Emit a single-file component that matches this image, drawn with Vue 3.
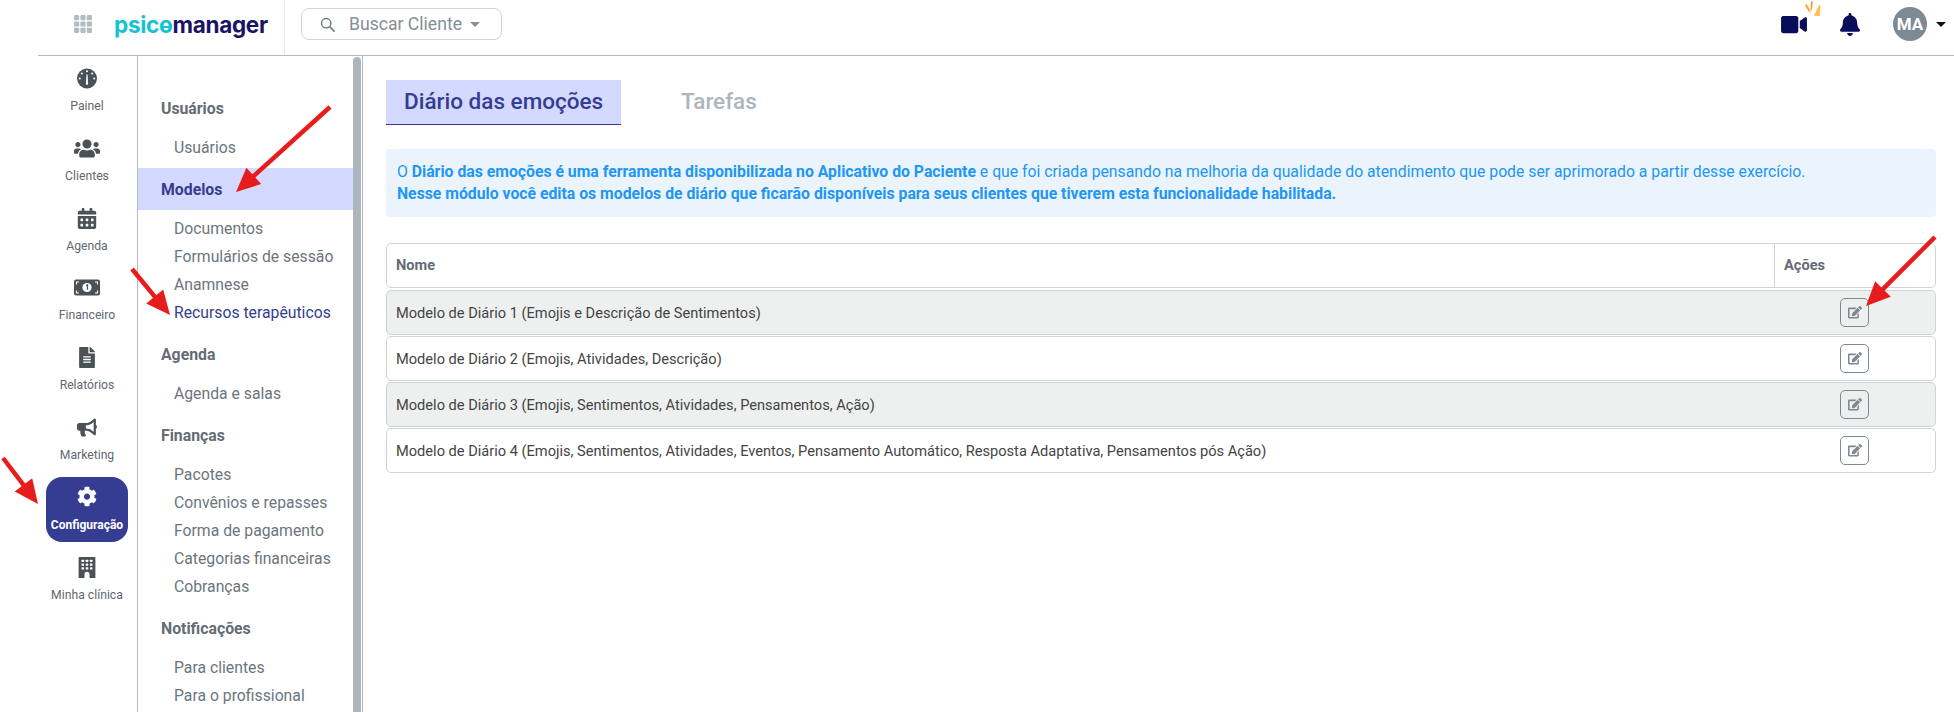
<script setup>
const railItems = [
  { label: 'Painel', icon: 'gauge' },
  { label: 'Clientes', icon: 'users' },
  { label: 'Agenda', icon: 'calendar' },
  { label: 'Financeiro', icon: 'money' },
  { label: 'Relatórios', icon: 'file' },
  { label: 'Marketing', icon: 'bullhorn' },
  { label: 'Configuração', icon: 'cog', active: true },
  { label: 'Minha clínica', icon: 'building' },
]

const groups = [
  { title: 'Usuários', items: ['Usuários'] },
  { title: 'Modelos', active: true, items: ['Documentos', 'Formulários de sessão', 'Anamnese', 'Recursos terapêuticos'] },
  { title: 'Agenda', items: ['Agenda e salas'] },
  { title: 'Finanças', items: ['Pacotes', 'Convênios e repasses', 'Forma de pagamento', 'Categorias financeiras', 'Cobranças'] },
  { title: 'Notificações', items: ['Para clientes', 'Para o profissional'] },
]

const rows = [
  'Modelo de Diário 1 (Emojis e Descrição de Sentimentos)',
  'Modelo de Diário 2 (Emojis, Atividades, Descrição)',
  'Modelo de Diário 3 (Emojis, Sentimentos, Atividades, Pensamentos, Ação)',
  'Modelo de Diário 4 (Emojis, Sentimentos, Atividades, Eventos, Pensamento Automático, Resposta Adaptativa, Pensamentos pós Ação)',
]

// red annotations: tail x/y, tip x/y
const arrows = [
  [330, 107, 236, 192],
  [132, 269, 170, 315],
  [3, 458, 38, 504],
  [1935, 237, 1866, 306],
]

function arrowHead([x1, y1, x2, y2]) {
  const a = Math.atan2(y2 - y1, x2 - x1)
  const len = 24
  const w = 11
  const bx = x2 - Math.cos(a) * len
  const by = y2 - Math.sin(a) * len
  const nx = -Math.sin(a) * w
  const ny = Math.cos(a) * w
  return `${x2},${y2} ${bx + nx},${by + ny} ${bx - nx},${by - ny}`
}

function arrowLineEnd([x1, y1, x2, y2]) {
  const a = Math.atan2(y2 - y1, x2 - x1)
  return { x: x2 - Math.cos(a) * 20, y: y2 - Math.sin(a) * 20 }
}
</script>

<template>
  <div class="page">
    <header class="topbar">
      <div class="brand">
        <svg class="apps" viewBox="0 0 18 18" aria-hidden="true">
          <g fill="#b4bcc2">
            <template v-for="r in 3" :key="r">
              <rect v-for="c in 3" :key="c" :x="(c - 1) * 6.4" :y="(r - 1) * 6.4" width="5.2" height="5.2" rx="1.2" />
            </template>
          </g>
        </svg>
        <span class="logo"><span class="logo-a">psic<span class="logo-o">o</span></span><span class="logo-b">manager</span></span>
      </div>
      <div class="search">
        <svg class="search-icon" viewBox="0 0 16 16" aria-hidden="true">
          <circle cx="6.6" cy="6.6" r="5" fill="none" stroke="#6c757d" stroke-width="1.5" />
          <path d="M10.4 10.4 L15 15" stroke="#6c757d" stroke-width="1.7" stroke-linecap="round" />
        </svg>
        <span>Buscar Cliente</span>
        <i class="caret grey"></i>
      </div>
      <div class="top-right">
        <div class="video">
          <svg class="video-icon" viewBox="0 0 576 512" aria-hidden="true">
            <path fill="#070d59" d="M336.2 64H47.8C21.4 64 0 85.4 0 111.8v288.4C0 426.6 21.4 448 47.8 448h288.4c26.4 0 47.8-21.4 47.8-47.8V111.8c0-26.4-21.4-47.8-47.8-47.8zm189.4 37.7L416 177.3v157.4l109.6 75.5c21.2 14.6 50.4-.3 50.4-25.8V127.5c0-25.4-29.1-40.4-50.4-25.8z" />
          </svg>
          <svg class="spark" viewBox="0 0 16 16" aria-hidden="true">
            <path fill="#ff9f1c" d="M0 5 L1.6 4 L4.6 9.5 L4.4 13 Z" />
            <path fill="#ff9f1c" d="M5.4 13 L6 1 L7.8 1.6 L7.2 8 Z" />
            <path fill="#ffc04d" d="M9 16 L14 5 L15.6 6 L14.8 16 Z" />
          </svg>
        </div>
        <svg class="bell" viewBox="0 0 448 512" aria-hidden="true">
          <path fill="#070d59" d="M224 512c35.32 0 63.97-28.65 63.97-64H160.03c0 35.35 28.65 64 63.97 64zm215.39-149.71c-19.32-20.76-55.47-51.99-55.47-154.29 0-77.7-54.48-139.9-127.94-155.16V32c0-17.67-14.32-32-31.98-32s-31.98 14.33-31.98 32v20.84C118.56 68.1 64.08 130.3 64.08 208c0 102.3-36.15 133.53-55.47 154.29-6 6.45-8.66 14.16-8.61 21.71.11 16.4 12.98 32 32.1 32h383.8c19.12 0 32-15.6 32.1-32 .05-7.55-2.61-15.27-8.61-21.71z" />
        </svg>
        <div class="avatar">MA</div>
        <i class="caret dark"></i>
      </div>
    </header>

    <div class="body">
      <nav class="rail">
        <a v-for="item in railItems" :key="item.label" class="rail-item" :class="{ active: item.active }">
          <svg v-if="item.icon === 'gauge'" class="rail-icon" viewBox="2 2 20 20" aria-hidden="true">
            <circle cx="12" cy="12" r="10" fill="currentColor" />
            <g fill="#fff">
              <circle cx="12" cy="4.8" r="1" />
              <circle cx="6.8" cy="7" r="1" />
              <circle cx="17.2" cy="7" r="1" />
              <circle cx="4.8" cy="12" r="1" />
              <circle cx="19.2" cy="12" r="1" />
              <path d="M11.4 8 h1.2 l.4 8.5 a1.2 1.2 0 1 1 -2 0 z" />
            </g>
          </svg>
          <svg v-else-if="item.icon === 'users'" class="rail-icon wide" viewBox="0 0 640 512" aria-hidden="true">
            <path fill="currentColor" d="M96 224c35.3 0 64-28.7 64-64s-28.7-64-64-64-64 28.7-64 64 28.7 64 64 64zm448 0c35.3 0 64-28.7 64-64s-28.7-64-64-64-64 28.7-64 64 28.7 64 64 64zm32 32h-64c-17.6 0-33.5 7.1-45.1 18.6 40.3 22.1 68.9 62 75.1 109.4h66c17.7 0 32-14.3 32-32v-32c0-35.3-28.7-64-64-64zm-256 0c61.9 0 112-50.1 112-112S381.9 32 320 32 208 82.1 208 144s50.1 112 112 112zm76.8 32h-8.3c-20.8 10-43.9 16-68.5 16s-47.6-6-68.5-16h-8.3C179.6 288 128 339.6 128 403.2V432c0 26.5 21.5 48 48 48h288c26.5 0 48-21.5 48-48v-28.8c0-63.6-51.6-115.2-115.2-115.2zm-223.7-13.4C161.5 263.1 145.6 256 128 256H64c-35.3 0-64 28.7-64 64v32c0 17.7 14.3 32 32 32h65.9c6.3-47.4 34.9-87.3 75.2-109.4z" />
          </svg>
          <svg v-else-if="item.icon === 'calendar'" class="rail-icon" viewBox="0 0 448 512" aria-hidden="true">
            <path fill="currentColor" d="M0 464c0 26.5 21.5 48 48 48h352c26.5 0 48-21.5 48-48V192H0v272zm320-196c0-6.6 5.4-12 12-12h40c6.6 0 12 5.4 12 12v40c0 6.6-5.4 12-12 12h-40c-6.6 0-12-5.4-12-12v-40zm0 128c0-6.6 5.4-12 12-12h40c6.6 0 12 5.4 12 12v40c0 6.6-5.4 12-12 12h-40c-6.6 0-12-5.4-12-12v-40zM192 268c0-6.6 5.4-12 12-12h40c6.6 0 12 5.4 12 12v40c0 6.6-5.4 12-12 12h-40c-6.6 0-12-5.4-12-12v-40zm0 128c0-6.6 5.4-12 12-12h40c6.6 0 12 5.4 12 12v40c0 6.6-5.4 12-12 12h-40c-6.6 0-12-5.4-12-12v-40zM64 268c0-6.6 5.4-12 12-12h40c6.6 0 12 5.4 12 12v40c0 6.6-5.4 12-12 12H76c-6.6 0-12-5.4-12-12v-40zm0 128c0-6.6 5.4-12 12-12h40c6.6 0 12 5.4 12 12v40c0 6.6-5.4 12-12 12H76c-6.6 0-12-5.4-12-12v-40zM400 64h-48V16c0-8.8-7.2-16-16-16h-32c-8.8 0-16 7.2-16 16v48H160V16c0-8.8-7.2-16-16-16h-32c-8.8 0-16 7.2-16 16v48H48C21.5 64 0 85.5 0 112v48h448v-48c0-26.5-21.5-48-48-48z" />
          </svg>
          <svg v-else-if="item.icon === 'money'" class="rail-icon wide" viewBox="0 0 26 18" aria-hidden="true">
            <rect x="0" y="1" width="26" height="16" rx="2" fill="currentColor" />
            <circle cx="13" cy="9" r="4.6" fill="#fff" />
            <path d="M12.2 7.2 L13.5 6.6 V11.2" stroke="currentColor" stroke-width="1.3" fill="none" />
            <path d="M2.5 6 V3.5 H5 M23.5 6 V3.5 H21 M2.5 12 V14.5 H5 M23.5 12 V14.5 H21" stroke="#fff" stroke-width="1.1" fill="none" />
          </svg>
          <svg v-else-if="item.icon === 'file'" class="rail-icon" viewBox="0 0 384 512" aria-hidden="true">
            <path fill="currentColor" d="M224 136V0H24C10.7 0 0 10.7 0 24v464c0 13.3 10.7 24 24 24h336c13.3 0 24-10.7 24-24V160H248c-13.2 0-24-10.8-24-24zm64 236c0 6.6-5.4 12-12 12H108c-6.6 0-12-5.4-12-12v-8c0-6.6 5.4-12 12-12h168c6.6 0 12 5.4 12 12v8zm0-64c0 6.6-5.4 12-12 12H108c-6.6 0-12-5.4-12-12v-8c0-6.6 5.4-12 12-12h168c6.6 0 12 5.4 12 12v8zm0-72v8c0 6.6-5.4 12-12 12H108c-6.6 0-12-5.4-12-12v-8c0-6.6 5.4-12 12-12h168c6.6 0 12 5.4 12 12zm96-114.1v6.1H256V0h6.1c6.4 0 12.5 2.5 17 7l97.9 98c4.5 4.5 7 10.6 7 16.9z" />
          </svg>
          <svg v-else-if="item.icon === 'bullhorn'" class="rail-icon" viewBox="0 0 576 512" aria-hidden="true">
            <path fill="currentColor" d="M576 240c0-23.63-12.95-44.04-32-55.12V32.01C544 23.26 537.02 0 512 0c-7.12 0-14.19 2.38-19.98 7.02l-85.03 68.03C364.28 109.19 310.66 128 256 128H64c-35.35 0-64 28.65-64 64v96c0 35.35 28.65 64 64 64h33.7c-1.39 10.48-2.18 21.14-2.18 32 0 39.77 9.26 77.35 25.56 110.94 5.19 10.69 16.52 17.06 28.4 17.06h74.28c26.05 0 41.69-29.84 25.9-50.56-16.4-21.52-26.15-48.36-26.15-77.44 0-11.11 1.62-21.79 4.41-32H256c54.66 0 108.28 18.81 150.98 52.95l85.03 68.03a32.023 32.023 0 0 0 19.98 7.02c24.92 0 32-22.78 32-32V295.13C563.05 284.04 576 263.63 576 240zm-96 141.42l-33.05-26.44C392.95 311.78 325.12 288 256 288v-96c69.12 0 136.95-23.78 190.95-66.98L480 98.58v282.84z" />
          </svg>
          <svg v-else-if="item.icon === 'cog'" class="rail-icon" viewBox="0 0 512 512" aria-hidden="true">
            <path fill="currentColor" d="M487.4 315.7l-42.6-24.6c4.3-23.2 4.3-47 0-70.2l42.6-24.6c4.9-2.8 7.1-8.6 5.5-14-11.1-35.6-30-67.8-54.7-94.6-3.8-4.1-10-5.1-14.8-2.3L380.8 110c-17.9-15.4-38.5-27.3-60.8-35.1V25.8c0-5.6-3.9-10.5-9.4-11.7-36.7-8.2-74.3-7.8-109.2 0-5.5 1.2-9.4 6.1-9.4 11.7V75c-22.2 7.9-42.8 19.8-60.8 35.1L88.7 85.5c-4.9-2.8-11-1.9-14.8 2.3-24.7 26.7-43.6 58.9-54.7 94.6-1.7 5.4.6 11.2 5.5 14L67.3 221c-4.3 23.2-4.3 47 0 70.2l-42.6 24.6c-4.9 2.8-7.1 8.6-5.5 14 11.1 35.6 30 67.8 54.7 94.6 3.8 4.1 10 5.1 14.8 2.3l42.6-24.6c17.9 15.4 38.5 27.3 60.8 35.1v49.2c0 5.6 3.9 10.5 9.4 11.7 36.7 8.2 74.3 7.8 109.2 0 5.5-1.2 9.4-6.1 9.4-11.7v-49.2c22.2-7.9 42.8-19.8 60.8-35.1l42.6 24.6c4.9 2.8 11 1.9 14.8-2.3 24.7-26.7 43.6-58.9 54.7-94.6 1.5-5.5-.7-11.3-5.6-14.1zM256 336c-44.1 0-80-35.9-80-80s35.9-80 80-80 80 35.9 80 80-35.9 80-80 80z" />
          </svg>
          <svg v-else class="rail-icon" viewBox="0 0 16 20" aria-hidden="true">
            <path fill="currentColor" d="M1 0 H15 A1 1 0 0 1 16 1 V20 H10.4 V16.4 A2.4 2.4 0 0 0 5.6 16.4 V20 H0 V1 A1 1 0 0 1 1 0 Z" />
            <g fill="#fff">
              <template v-for="r in 3" :key="r">
                <rect v-for="c in 3" :key="c" :x="2.8 + (c - 1) * 4" :y="2.6 + (r - 1) * 3.6" width="2.4" height="2.2" rx=".4" />
              </template>
            </g>
          </svg>
          <span>{{ item.label }}</span>
        </a>
      </nav>

      <aside class="submenu">
        <div class="submenu-inner">
          <section v-for="g in groups" :key="g.title" class="group">
            <h4 class="group-title" :class="{ active: g.active }">{{ g.title }}</h4>
            <ul>
              <li v-for="it in g.items" :key="it" :class="{ current: it === 'Recursos terapêuticos' }">{{ it }}</li>
            </ul>
          </section>
        </div>
        <div class="scrollbar"></div>
      </aside>

      <main class="content">
        <div class="tabs">
          <div class="tab active">Diário das emoções</div>
          <div class="tab">Tarefas</div>
        </div>

        <div class="notice">
          <p>O <b>Diário das emoções é uma ferramenta disponibilizada no Aplicativo do Paciente</b> e que foi criada pensando na melhoria da qualidade do atendimento que pode ser aprimorado a partir desse exercício.</p>
          <p><b>Nesse módulo você edita os modelos de diário que ficarão disponíveis para seus clientes que tiverem esta funcionalidade habilitada.</b></p>
        </div>

        <div class="table">
          <div class="thead">
            <div class="th-name">Nome</div>
            <div class="th-actions">Ações</div>
          </div>
          <div v-for="(row, i) in rows" :key="row" class="row" :class="{ odd: i % 2 === 0 }">
            <span>{{ row }}</span>
            <button class="edit" type="button" aria-label="Editar">
              <svg viewBox="0 0 576 512" aria-hidden="true">
                <path fill="#7d8a93" d="M402.6 83.2l90.2 90.2c3.8 3.8 3.8 10 0 13.8L274.4 405.6l-92.8 10.3c-12.4 1.4-22.9-9.1-21.5-21.5l10.3-92.8L388.8 83.2c3.8-3.8 10-3.8 13.8 0zm162-22.9l-48.8-48.8c-15.2-15.2-39.9-15.2-55.2 0l-35.4 35.4c-3.8 3.8-3.8 10 0 13.8l90.2 90.2c3.8 3.8 10 3.8 13.8 0l35.4-35.4c15.2-15.3 15.2-40 0-55.2zM384 346.2V448H64V128h229.8c3.2 0 6.2-1.3 8.5-3.5l40-40c7.6-7.6 2.2-20.5-8.5-20.5H48C21.5 64 0 85.5 0 112v352c0 26.5 21.5 48 48 48h352c26.5 0 48-21.5 48-48V306.2c0-10.7-12.9-16-20.5-8.5l-40 40c-2.2 2.3-3.5 5.3-3.5 8.5z" />
              </svg>
            </button>
          </div>
        </div>
      </main>
    </div>

    <svg class="annotations" viewBox="0 0 1954 712" aria-hidden="true">
      <g v-for="(a, i) in arrows" :key="i">
        <line :x1="a[0]" :y1="a[1]" :x2="arrowLineEnd(a).x" :y2="arrowLineEnd(a).y" stroke="#e81c1c" stroke-width="4.5" />
        <polygon :points="arrowHead(a)" fill="#e81c1c" />
      </g>
    </svg>
  </div>
</template>

<style>
html, body { margin: 0; background: #fff; }
</style>

<style scoped>
.page {
  position: relative;
  width: 1954px;
  height: 712px;
  overflow: hidden;
  background: #fff;
  font-family: Roboto, "Liberation Sans", sans-serif;
  color: #6c757d;
}

.topbar {
  display: flex;
  align-items: center;
  height: 56px;
  margin-left: 38px;
  box-sizing: border-box;
  border-bottom: 1px solid #b4bcc2;
}
.brand {
  display: flex;
  align-items: center;
  width: 247px;
  height: 100%;
  padding-left: 36px;
  box-sizing: border-box;
  border-right: 1px solid #e4e7ea;
}
.apps { width: 18px; height: 18px; margin-top: -7px; }
.logo {
  margin-left: 22px;
  margin-top: -7px;
  font-family: Inter, sans-serif;
  font-size: 22.5px;
  font-weight: 700;
  letter-spacing: -.3px;
  white-space: nowrap;
}
.logo-a { color: #12c4d3; }
.logo-b { color: #1b1464; }
.logo-o { position: relative; }
.logo-o::after {
  content: "";
  position: absolute;
  left: 2px;
  right: 2px;
  top: 15px;
  height: 2px;
  background: #12c4d3;
}

.search {
  display: flex;
  align-items: center;
  width: 201px;
  height: 32px;
  margin-left: 16px;
  margin-top: -7px;
  padding-left: 18px;
  box-sizing: border-box;
  border: 1px solid #ced4da;
  border-radius: 8px;
  font-size: 17.6px;
  color: #868e96;
  white-space: nowrap;
}
.search-icon { width: 15px; height: 15px; margin-right: 14px; flex: none; }
.caret {
  display: inline-block;
  width: 0;
  height: 0;
  border-left: 5px solid transparent;
  border-right: 5px solid transparent;
}
.caret.grey { border-top: 5px solid #868e96; margin-left: 8px; }
.caret.dark { border-top: 5px solid #111; margin-left: 9px; }

.top-right {
  display: flex;
  align-items: center;
  margin-left: auto;
  padding-right: 8px;
  margin-top: -7px;
}
.video { position: relative; display: flex; }
.video-icon { width: 26px; height: 23px; }
.spark { position: absolute; left: 24px; top: -13px; width: 16px; height: 16px; }
.bell { width: 20px; height: 23px; margin-left: 33px; }
.avatar {
  display: flex;
  align-items: center;
  justify-content: center;
  width: 34px;
  height: 34px;
  margin-left: 33px;
  border-radius: 50%;
  background: #7d8a93;
  color: #fff;
  font-size: 17px;
  font-weight: 700;
}

.body {
  display: flex;
  height: 656px;
  margin-left: 38px;
}

.rail {
  display: flex;
  flex-direction: column;
  align-items: center;
  width: 100px;
  flex: none;
  padding: 11px 1px 0 0;
  box-sizing: border-box;
  border-right: 1px solid #b4bcc2;
}
.rail-item {
  display: flex;
  flex-direction: column;
  align-items: center;
  width: 82px;
  height: 69.8px;
  flex: none;
  padding-top: 1px;
  box-sizing: border-box;
  font-size: 12.2px;
  color: #5f686f;
}
.rail-item span { margin-top: 10px; line-height: 14px; white-space: nowrap; }
.rail-icon { width: 20px; height: 21px; color: #4b5257; flex: none; }
.rail-icon.wide { width: 26px; }
.rail-item.active {
  height: 65px;
  margin-top: -8.8px;
  margin-bottom: 14px;
  padding-top: 9px;
  border-radius: 16px;
  background: #343d92;
  color: #fff;
  font-weight: 700;
  font-size: 12px;
}
.rail-item.active span { margin-top: 11px; }
.rail-item.active .rail-icon { color: #fff; }

.submenu {
  display: flex;
  flex: none;
  width: 225px;
  box-sizing: border-box;
  border-right: 1px solid #b4bcc2;
}
.submenu-inner {
  width: 215px;
  padding-top: 31px;
  flex: none;
}
.scrollbar {
  width: 8px;
  margin-top: 1px;
  background: #adb5bd;
  border-radius: 4px 4px 0 0;
}
.group { margin-bottom: 7px; }
.group-title {
  margin: 0;
  height: 42px;
  padding-left: 23px;
  font-size: 15.8px;
  font-weight: 700;
  line-height: 44px;
  color: #646c74;
}
.group-title.active {
  background: #d4daff;
  color: #343d92;
}
.group ul { margin: 4px 0 0; padding: 0; list-style: none; }
.group li {
  height: 28px;
  padding-left: 36px;
  font-size: 15.75px;
  line-height: 30px;
  color: #6c757d;
  white-space: nowrap;
}
.group li.current { color: #343d92; }

.content {
  flex: 1;
  padding: 24px 18px 0 23px;
  min-width: 0;
}
.tabs { display: flex; }
.tab {
  height: 45px;
  padding: 0 18px;
  box-sizing: border-box;
  font-size: 22.5px;
  font-weight: 500;
  line-height: 42px;
  color: #adb5bd;
}
.tab + .tab { margin-left: 42px; }
.tab.active {
  width: 235px;
  background: #d4daff;
  border-bottom: 1px solid #343d92;
  color: #343d92;
  white-space: nowrap;
}

.notice {
  height: 68px;
  margin-top: 24px;
  padding: 12px 11px;
  box-sizing: border-box;
  border-radius: 4px;
  background: #ebf4fd;
  color: #2196f3;
  font-size: 15.77px;
  line-height: 22px;
}
.notice p { margin: 0; white-space: nowrap; }
.notice b { font-weight: 700; }

.table {
  display: flex;
  flex-direction: column;
  gap: 1px;
  margin-top: 26px;
  font-size: 14.62px;
}
.thead {
  display: flex;
  height: 45px;
  margin-bottom: 1px;
  box-sizing: border-box;
  border: 1px solid #ced4da;
  border-radius: 5px;
  font-weight: 700;
  line-height: 43px;
  color: #646c74;
}
.th-name { flex: 1; padding-left: 9px; border-right: 1px solid #ced4da; }
.th-actions { width: 160px; box-sizing: border-box; padding-left: 9px; }
.row {
  display: flex;
  align-items: center;
  justify-content: space-between;
  height: 45px;
  padding: 0 66px 0 9px;
  box-sizing: border-box;
  border: 1px solid #ced4da;
  border-radius: 5px;
  color: #444;
}
.row.odd { background: #eef0f0; }
.edit {
  display: flex;
  align-items: center;
  justify-content: center;
  width: 29px;
  height: 29px;
  padding: 0;
  border: 1px solid #7d8a93;
  border-radius: 5px;
  background: transparent;
}
.edit svg { width: 14px; height: 12.5px; }

.annotations {
  position: absolute;
  inset: 0;
  width: 1954px;
  height: 712px;
  pointer-events: none;
}
</style>
